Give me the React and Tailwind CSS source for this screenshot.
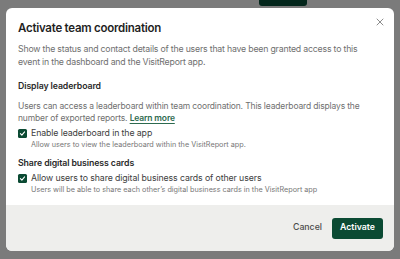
import { X } from "lucide-react";

const Check = () => (
  <span className="mt-[2px] flex h-[9px] w-[9px] shrink-0 items-center justify-center rounded-[1.5px] bg-[#0b4a33]">
    <svg viewBox="0 0 10 10" className="h-[7px] w-[7px]" fill="none">
      <path d="M2 5.2 4.1 7.3 8 2.8" stroke="white" strokeWidth="1.6" strokeLinecap="round" strokeLinejoin="round" />
    </svg>
  </span>
);

const Option = ({ label, hint }) => (
  <label className="flex gap-[4px]">
    <Check />
    <div>
      <div className="text-[8.75px] leading-[12px] tracking-[-0.1px] text-[#3d3d3d]">{label}</div>
      <div className="text-[7.25px] leading-[12px] text-[#777]">{hint}</div>
    </div>
  </label>
);

export default function App() {
  return (
    <div className="relative h-[259px] w-[400px] overflow-hidden bg-[#7b7b7b] pt-2 font-['Inter',sans-serif]">
      {/* page button behind the overlay */}
      <div className="absolute left-[259px] top-[-6px] h-3 w-12 rounded-[3px] bg-[#03261b]" />

      <div className="relative mx-[6px] flex h-[243px] flex-col overflow-hidden rounded-[6px] bg-white">
        <button className="absolute right-[8px] top-[8px] text-[#666]">
          <X size={12} strokeWidth={1.5} />
        </button>

        <div className="flex-1 px-3 pt-[12px]">
          <h2 className="text-[11.5px] font-semibold leading-[16px] tracking-[-0.25px] text-[#1f1f1f]">
            Activate team coordination
          </h2>
          <p className="mt-[7px] whitespace-nowrap text-[8.75px] leading-[13px] tracking-[-0.2px] text-[#6f6f6f]">
            Show the status and contact details of the users that have been granted access to this
            <br />
            event in the dashboard and the VisitReport app.
          </p>

          <h3 className="mt-[11px] text-[8.75px] font-semibold leading-[13px] tracking-[-0.1px] text-[#2a2a2a]">
            Display leaderboard
          </h3>
          <p className="mt-[7px] text-[8.5px] leading-[12px] tracking-[-0.15px] text-[#6f6f6f]">
            Users can access a leaderboard within team coordination. This leaderboard displays the
            number of exported reports.{" "}
            <a className="font-semibold text-[#2d6a4f] underline underline-offset-[1.5px]">Learn more</a>
          </p>

          <div className="mt-[3px]">
            <Option
              label="Enable leaderboard in the app"
              hint="Allow users to view the leaderboard within the VisitReport app."
            />
          </div>

          <h3 className="mt-[6px] text-[8.75px] font-semibold leading-[13px] tracking-[-0.1px] text-[#2a2a2a]">
            Share digital business cards
          </h3>
          <div className="mt-[2px]">
            <Option
              label="Allow users to share digital business cards of other users"
              hint="Users will be able to share each other’s digital business cards in the VisitReport app"
            />
          </div>
        </div>

        <div className="flex h-[46px] items-center justify-end gap-[10px] bg-[#eeeeec] pr-[11px]">
          <button className="text-[8.75px] font-medium text-[#4a4a4a]">Cancel</button>
          <button className="h-[21px] rounded-[3px] bg-[#0b4a33] px-[8px] text-[8.75px] font-semibold text-white">
            Activate
          </button>
        </div>
      </div>
    </div>
  );
}
